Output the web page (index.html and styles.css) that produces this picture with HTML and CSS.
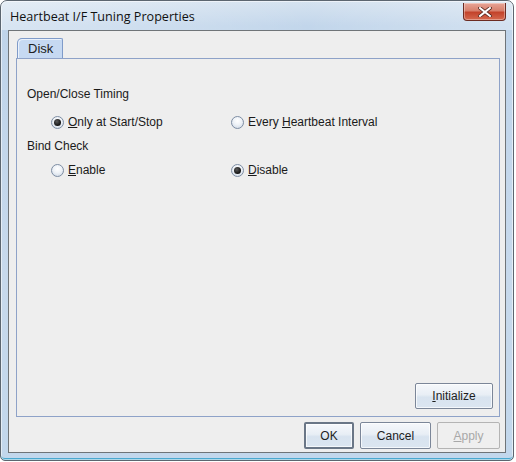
FILE: index.html
```html
<!DOCTYPE html>
<html>
<head>
<meta charset="utf-8">
<link rel="stylesheet" href="styles.css">
</head>
<body>
<div class="window">
  <div class="titlebar">
    <span class="title">Heartbeat I/F Tuning Properties</span>
    <div class="close"><svg width="14" height="10" viewBox="0 0 14 10"><path d="M2 1 L12 9 M12 1 L2 9" stroke="#5a2a22" stroke-width="3.6" stroke-linecap="square"/><path d="M2 1 L12 9 M12 1 L2 9" stroke="#ffffff" stroke-width="2" stroke-linecap="square"/></svg></div>
  </div>
  <div class="client">
    <div class="tabs"><div class="tab">Disk</div></div>
    <div class="panel">
      <div class="section">Open/Close Timing</div>
      <div class="radios">
        <label class="radio"><span class="dot on"></span><span><u>O</u>nly at Start/Stop</span></label>
        <label class="radio"><span class="dot"></span><span>Every <u>H</u>eartbeat Interval</span></label>
      </div>
      <div class="section">Bind Check</div>
      <div class="radios compact">
        <label class="radio"><span class="dot"></span><span><u>E</u>nable</span></label>
        <label class="radio"><span class="dot on"></span><span><u>D</u>isable</span></label>
      </div>
      <div class="spacer"></div>
      <div class="panel-actions"><button class="btn init"><u>I</u>nitialize</button></div>
    </div>
    <div class="actions">
      <button class="btn ok">OK</button>
      <button class="btn cancel">Cancel</button>
      <button class="btn apply" disabled><u>A</u>pply</button>
    </div>
  </div>
</div>
</body>
</html>
```
FILE: styles.css
```css
* { box-sizing: border-box; }
html, body { margin: 0; padding: 0; background: #ffffff; }
body { font-family: "Liberation Sans", Arial, sans-serif; font-size: 12px; color: #1a1a1a; }

.window {
  width: 514px;
  height: 461px;
  border: 1px solid #5c6670;
  border-radius: 7px 7px 5px 5px;
  background: linear-gradient(180deg, #d3e1ef 0px, #bfd4ea 25px, #c7d9ec 60%, #c2d7ec 100%);
  box-shadow: inset 0 0 0 1px rgba(255,255,255,0.55), inset 0 -2px 0 #4aa8cf;
  display: flex;
  flex-direction: column;
  overflow: hidden;
}

.titlebar {
  height: 29px;
  display: flex;
  align-items: flex-start;
  justify-content: space-between;
  padding: 0 7px 0 9px;
  background: linear-gradient(90deg, rgba(255,255,255,0.4), rgba(255,255,255,0.05) 60%, rgba(255,255,255,0.3));
}
.title {
  font-family: "Open Sans", "Liberation Sans", sans-serif;
  font-size: 12.6px;
  color: #111111;
  margin-top: 7px;
}
.close {
  margin-top: 2px;
  width: 43px;
  height: 18px;
  border: 1px solid #6b2b22;
  border-top: none;
  border-radius: 0 0 4px 4px;
  background: linear-gradient(180deg, #e8a597 0%, #d7806d 45%, #c3432b 55%, #d5694f 100%);
  box-shadow: inset 0 0 0 1px rgba(255,255,255,0.35);
  display: flex;
  align-items: center;
  justify-content: center;
}

.client {
  flex: 1;
  margin: 0 7px 7px 7px;
  border: 1px solid #6f7478;
  background: #eeeeee;
  display: flex;
  flex-direction: column;
  padding: 7px 5px 3px 7px;
}

.tabs { display: flex; padding-left: 1px; height: 20px; }
.tab {
  width: 46px;
  height: 20px;
  border: 1px solid #7f9bc9;
  border-bottom: none;
  background: #c6d9f2;
  padding: 2px 0 0 10px;
  font-size: 13px;
  color: #202020;
  border-radius: 5px 2px 0 0;
  box-shadow: inset 1px 1px 0 #eaf1fb;
}

.panel {
  flex: 1;
  border: 1px solid #8ea2c8;
  display: flex;
  flex-direction: column;
  padding: 27px 6px 7px 10px;
}
.section { height: 16px; line-height: 16px; }
.radios {
  display: grid;
  grid-template-columns: 180px auto;
  padding-left: 24px;
  margin: 12px 0 8px 0;
}
.radios.compact { margin: 8px 0 0 0; }
.radio { display: flex; align-items: center; height: 16px; gap: 4px; }
.radio u, .btn u { text-decoration: underline; text-underline-offset: 1px; }

.dot {
  width: 13px;
  height: 13px;
  border-radius: 50%;
  border: 1px solid #7d8da3;
  background: radial-gradient(circle at 50% 35%, #ffffff 0%, #eef2f7 45%, #c9d4e2 100%);
  display: flex;
  align-items: center;
  justify-content: center;
}
.dot.on::after {
  content: "";
  width: 7px;
  height: 7px;
  border-radius: 50%;
  background: radial-gradient(circle at 40% 35%, #5a5a5a, #111111 70%);
}

.spacer { flex: 1; }
.panel-actions { display: flex; justify-content: flex-end; }

.btn {
  font-family: "Liberation Sans", Arial, sans-serif;
  font-size: 12px;
  color: #1e1e1e;
  height: 26px;
  border: 1px solid #7b8698;
  border-radius: 2px;
  background: linear-gradient(180deg, #f6f8fb 0%, #e8eef5 45%, #d8e3ef 55%, #dbe5f0 100%);
  box-shadow: inset 0 0 0 1px rgba(255,255,255,0.7);
  padding: 0;
}
.init { width: 78px; }

.actions {
  display: flex;
  justify-content: flex-end;
  gap: 6px;
  padding: 5px 0 0 0;
}
.ok { width: 50px; height: 27px; border: 2px solid #6a7686; }
.cancel { width: 71px; height: 27px; }
.apply {
  width: 63px;
  height: 27px;
  color: #a8a8a8;
  border-color: #b4b4b4;
  background: #efefef;
  box-shadow: none;
}
```
